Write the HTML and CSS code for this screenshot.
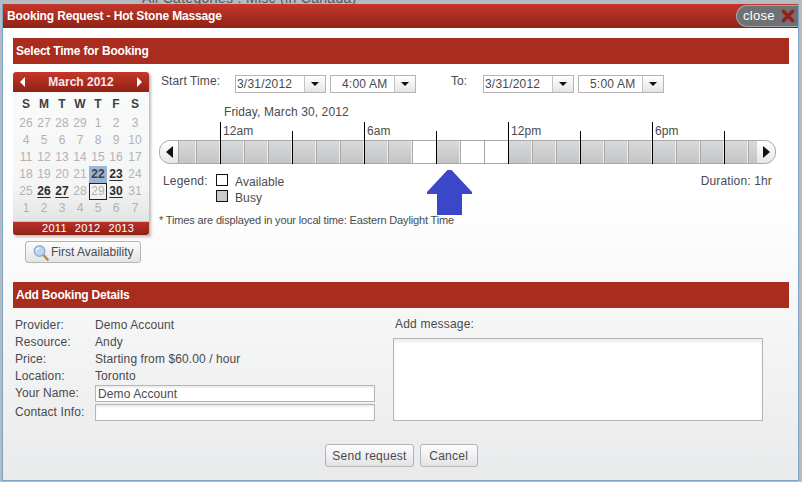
FILE: index.html
```html
<!DOCTYPE html>
<html lang="en">
<head>
<meta charset="utf-8">
<title>Booking Request</title>
<link rel="stylesheet" href="styles.css">
</head>
<body>
<div class="backdrop-text">All Categories : Misc (in Canada)</div>
<div class="dialog">
  <header class="titlebar">
    <span class="title">Booking Request - Hot Stone Massage</span>
    <span class="close">close
      <svg class="close-x" width="14" height="14" viewBox="0 0 14 14"><path d="M2.500 2.500L11.500 11.500M11.500 2.500L2.500 11.500" stroke="#97201a" stroke-width="3.600" stroke-linecap="round"/></svg>
    </span>
  </header>
  <div class="content">
    <h2 class="bar">Select Time for Booking</h2>
    <section class="time-section">
      <div class="cal-col">
        <div class="calendar">
          <div class="cal-head"><i class="tri tri-l"></i><span>March 2012</span><i class="tri tri-r"></i></div>
          <div class="cal-grid">
            <b>S</b><b>M</b><b>T</b><b>W</b><b>T</b><b>F</b><b>S</b>
            <span>26</span><span>27</span><span>28</span><span>29</span><span>1</span><span>2</span><span>3</span>
            <span>4</span><span>5</span><span>6</span><span>7</span><span>8</span><span>9</span><span>10</span>
            <span>11</span><span>12</span><span>13</span><span>14</span><span>15</span><span>16</span><span>17</span>
            <span>18</span><span>19</span><span>20</span><span>21</span><span class="today">22</span><span class="avail">23</span><span>24</span>
            <span>25</span><span class="avail">26</span><span class="avail">27</span><span>28</span><span class="selected">29</span><span class="avail">30</span><span>31</span>
            <span>1</span><span>2</span><span>3</span><span>4</span><span>5</span><span>6</span><span>7</span>
          </div>
          <div class="cal-foot"><span>2011</span><span>2012</span><span>2013</span></div>
        </div>
        <button class="btn first-btn">
          <svg width="16" height="17" viewBox="0 0 16 17"><path d="M10 10.500L14.500 15.500" stroke="#b98a45" stroke-width="2.600" stroke-linecap="round"/><circle cx="6.500" cy="7" r="5.300" fill="#bcd6f2" stroke="#8fb0d6" stroke-width="1.400"/><path d="M3.500 6.500A3.200 3.200 0 0 1 6.500 3.800" stroke="#fff" stroke-width="1.200" fill="none"/></svg>
          First Availability
        </button>
      </div>
      <div class="time-col">
        <div class="time-row">
          <span class="lbl-start">Start Time:</span>
          <span class="combo date"><span class="combo-val">3/31/2012</span><i class="combo-btn"></i></span>
          <span class="combo clock"><span class="combo-val">4:00 AM</span><i class="combo-btn"></i></span>
          <span class="lbl-to">To:</span>
          <span class="combo date"><span class="combo-val">3/31/2012</span><i class="combo-btn"></i></span>
          <span class="combo clock"><span class="combo-val">5:00 AM</span><i class="combo-btn"></i></span>
        </div>
        <div class="day-label">Friday, March 30, 2012</div>
        <div class="timeline">
          <div class="hours"><span>12am</span><span>6am</span><span>12pm</span><span>6pm</span></div>
          <div class="track">
            <div class="end end-l"><i class="tri-big tl"></i></div>
            <div class="slots">
              <i class="s0"></i><i></i><i></i><i></i><i></i><i></i><i></i><i></i><i></i><i></i>
              <i class="free"></i><i></i><i class="free"></i><i class="free"></i>
              <i></i><i></i><i></i><i></i><i></i><i></i><i></i><i></i><i></i><i></i><i class="s9"></i>
            </div>
            <div class="end end-r"><i class="tri-big tr"></i></div>
          </div>
          <i class="tick tall t1"></i><i class="tick t2"></i><i class="tick tall t3"></i><i class="tick t4"></i><i class="tick tall t5"></i><i class="tick t6"></i><i class="tick tall t7"></i><i class="tick t8"></i>
        </div>
        <div class="legend-row">
          <div class="legend">
            <span class="legend-lbl">Legend:</span>
            <div class="legend-items">
              <div class="legend-item"><i class="swatch"></i><span>Available</span></div>
              <div class="legend-item"><i class="swatch busy"></i><span>Busy</span></div>
            </div>
          </div>
          <span class="duration">Duration: 1hr</span>
        </div>
        <p class="note">* Times are displayed in your local time: Eastern Daylight Time</p>
        <svg class="arrow" width="45" height="45" viewBox="0 0 45 45"><path d="M20.500 0H24.500L45 22V24H35V45H10V24H0V22Z" fill="#3b46c9"/></svg>
      </div>
    </section>
    <h2 class="bar">Add Booking Details</h2>
    <section class="details">
      <div class="fields">
        <span class="k">Provider:</span><span>Demo Account</span>
        <span class="k">Resource:</span><span>Andy</span>
        <span class="k">Price:</span><span>Starting from $60.00 / hour</span>
        <span class="k">Location:</span><span>Toronto</span>
        <span class="k">Your Name:</span><input class="input" type="text" value="Demo Account">
        <span class="k contact">Contact Info:</span><input class="input" type="text">
      </div>
      <div class="message">
        <label class="msg-lbl">Add message:</label>
        <textarea class="msg-box"></textarea>
      </div>
    </section>
    <div class="actions">
      <button class="btn">Send request</button>
      <button class="btn cancel">Cancel</button>
    </div>
  </div>
</div>
</body>
</html>
```
FILE: styles.css
```css
* { box-sizing: border-box; }
html, body { margin: 0; height: 100%; }
body {
  width: 802px; height: 482px; overflow: hidden; position: relative;
  background: #b4bcc2;
  padding: 4px 3px 1px 2px;
  font: 12px/14px "Liberation Sans", Arial, sans-serif;
  color: #4a4a4c;
}
.backdrop-text { position: absolute; left: 142px; top: -9px; font-size: 14px; line-height: 14px; color: #55585c; letter-spacing: .3px; }
.dialog {
  position: relative; width: 797px; height: 477px;
  border: 1px solid #7da3c9; border-top: 0;
  background: linear-gradient(#fff 0, #fff 40%, #e9eaeb 100%);
  display: flex; flex-direction: column;
}
.titlebar {
  height: 24px; flex: none; display: flex; align-items: center; justify-content: space-between;
  background: linear-gradient(#c5372a, #8f2216);
  color: #fff; padding-left: 4px;
}
.title { font-weight: bold; font-size: 12px; letter-spacing: -.15px; }
.close {
  height: 22px; width: 62px; border-radius: 11px 0 0 11px;
  background: #6e7275; border: 1px solid #a3a6a8; border-right: 0;
  display: flex; align-items: center; padding-left: 6px; font-size: 13px; letter-spacing: .3px; gap: 6px;
  font-weight: normal;
}
.close-x { flex: none; }
.content { padding: 10px 9px 0 10px; flex: 1; display: flex; flex-direction: column; }
.bar {
  margin: 0; height: 26px; flex: none; background: #a92c1e; color: #fff;
  font-size: 12px; font-weight: bold; line-height: 26px; padding-left: 3px; letter-spacing: -.2px;
}
.time-section { display: flex; height: 218px; flex: none; padding-top: 8px; }
.cal-col { width: 136px; flex: none; display: flex; flex-direction: column; align-items: flex-start; }
.calendar { width: 136px; height: 163px; box-shadow: 2px 2px 3px #bbb; background: linear-gradient(#fafbfb, #f5f5f5 70%, #dcdddd); border-radius: 3px 3px 0 0; display: flex; flex-direction: column; }
.cal-head {
  height: 20px; flex: none; background: linear-gradient(#c5372a, #8f2216); color: #f6e9e7; font-weight: bold;
  display: flex; align-items: center; justify-content: space-between; padding: 0 7px; border-radius: 3px 3px 0 0;
}
.tri { width: 0; height: 0; border-style: solid; border-width: 5px 0; border-color: transparent; }
.tri-l { border-right: 5px solid #fff; }
.tri-r { border-left: 5px solid #fff; }
.cal-grid { display: grid; grid-template-columns: repeat(6, 18px) 20px; grid-template-rows: 19px repeat(6, 17px); padding: 4px 0 0 4px; flex: 1; text-align: center; line-height: 17px; color: #b2b2b2; }
.cal-grid b { color: #3f3f42; }
.cal-grid .today { background: #9cb4d4; color: #3f4148; font-weight: bold; }
.cal-grid .avail { color: #2c2c2e; font-weight: bold; text-decoration: underline; text-underline-offset: 2px; }
.cal-grid .selected { border: 1px solid #222; line-height: 15px; }
.cal-foot { height: 14px; flex: none; background: linear-gradient(#b9322a, #8f2216); border-top: 1px solid #e3b9b4; border-radius: 0 0 3px 3px; color: #fff; display: flex; justify-content: flex-start; padding-left: 29px; gap: 8px; font-size: 11px; letter-spacing: .3px; line-height: 12px; }
.btn {
  height: 23px; padding: 0 6px; border: 1px solid #b4b4b4; border-radius: 3px;
  background: linear-gradient(#fcfcfc, #e4e4e4); font: 12px "Liberation Sans", Arial, sans-serif; color: #4a4a4c; letter-spacing: .25px;
}
.first-btn { width: 116px; height: 22px; margin: 6px 0 0 12px; display: flex; align-items: center; gap: 2px; padding: 0 0 0 7px; white-space: nowrap; letter-spacing: 0; }
.time-col { position: relative; flex: 1; padding-left: 12px; }
.time-row { display: flex; height: 20px; margin-top: 2px; align-items: flex-start; }
.lbl-start { width: 74px; letter-spacing: .1px; }
.lbl-to { width: 32px; margin-left: 35px; }
.combo { display: flex; height: 18px; border: 1px solid #b5b5b5; background: #fff; margin-top: 1px; }
.combo.date { width: 91px; margin-right: 4px; }
.combo.clock { width: 86px; }
.combo-val { flex: 1; padding-left: 1px; line-height: 16px; letter-spacing: .2px; }
.clock .combo-val { padding-left: 11px; }
.combo-btn { width: 21px; flex: none; border-left: 1px solid #c4c4c4; background: linear-gradient(#fff, #e4e4e4); position: relative; }
.combo-btn::after { content: ""; position: absolute; left: 6px; top: 6px; border-style: solid; border-width: 4px 4px 0; border-color: #111 transparent transparent; }
.day-label { margin: 11px 0 0 63px; height: 14px; letter-spacing: .1px; }
.timeline { position: relative; width: 617px; margin: 0 0 0 -2px; padding-top: 5px; }
.hours { height: 16px; display: flex; }
.hours span { width: 144px; flex: none; padding-left: 3px; letter-spacing: .1px; }
.hours span:first-child { margin-left: 61px; }
.track { display: flex; height: 24px; border: 1px solid #a9a9a9; border-radius: 11px; background: #d0d1d2; overflow: hidden; }
.end { width: 18px; flex: none; background: linear-gradient(#fff, #e6e6e6); display: flex; align-items: center; justify-content: center; }
.tri-big { width: 0; height: 0; border-style: solid; border-width: 6px 0; border-color: transparent; }
.tl { border-right: 7px solid #111; }
.tr { border-left: 7px solid #111; }
.slots { flex: 1; display: flex; }
.slots i { width: 24px; flex: none; background: linear-gradient(#d9dadb, #c3c4c5); border-left: 1px solid #a9a9a9; border-right: 1px solid #eee; }
.slots .free { background: #fff; border-right-color: #fafafa; }
.slots .s0 { width: 18px; }
.slots .s9 { width: 9px; border-right: 0; }
.tick { position: absolute; bottom: 0; width: 1px; height: 33px; background: #000; }
.tick.tall { height: 42px; }
.t1 { left: 61px; } .t2 { left: 133px; } .t3 { left: 205px; } .t4 { left: 277px; }
.t5 { left: 349px; } .t6 { left: 421px; } .t7 { left: 493px; } .t8 { left: 565px; }
.legend-row { display: flex; justify-content: space-between; width: 611px; margin-top: 10px; height: 31px; }
.legend { display: flex; padding-left: 2px; }
.legend-lbl { width: 53px; letter-spacing: .2px; }
.legend-item { display: flex; align-items: flex-start; height: 16px; gap: 7px; letter-spacing: .1px; }
.legend-item span { margin-top: 1px; }
.swatch { width: 12px; height: 12px; border: 1px solid #111; background: #fff; }
.swatch.busy { background: #c9c9c9; }
.duration { letter-spacing: .15px; }
.note { margin: 9px 0 0 -2px; font-size: 11px; line-height: 13px; letter-spacing: -.15px; }
.arrow { position: absolute; left: 278px; top: 98px; }
.details { display: flex; padding: 9px 0 0 2px; height: 136px; flex: none; }
.fields { display: grid; grid-template-columns: 80px 280px; grid-auto-rows: 17px; width: 380px; line-height: 17px; letter-spacing: .1px; }
.input { height: 17px; width: 280px; border: 1px solid #b5b5b5; padding: 0 2px; font: 12px "Liberation Sans", Arial, sans-serif; color: #4a4a4c; background: #fff; box-shadow: inset 0 2px 2px #eee; letter-spacing: .1px; outline: 0; }
.fields .input:last-child, .fields .contact { margin-top: 2px; }
.message { margin-left: -2px; }
.msg-lbl { display: block; height: 21px; letter-spacing: .2px; margin-left: 2px; }
.msg-box { display: block; width: 370px; height: 83px; border: 1px solid #b5b5b5; margin: 0; resize: none; box-shadow: inset 0 3px 3px #eee; outline: 0; }
.actions { display: flex; justify-content: center; gap: 6px; padding-left: 1px; }
.actions .cancel { width: 58px; }
```
